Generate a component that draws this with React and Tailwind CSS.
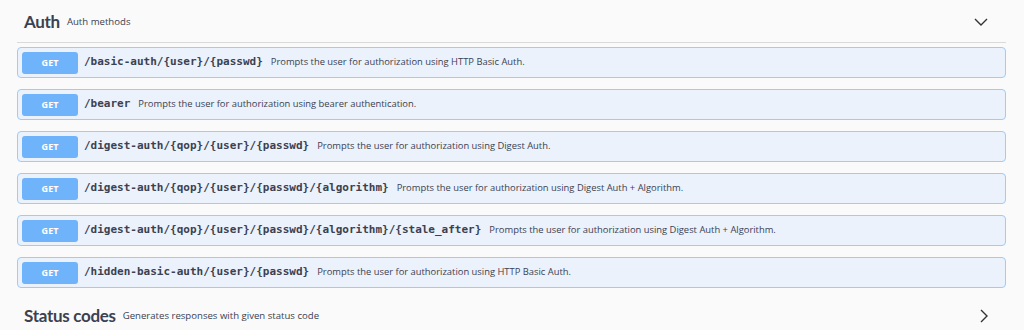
import React from 'react';

const ops = [
  { path: '/basic-auth/{user}/{passwd}', desc: 'Prompts the user for authorization using HTTP Basic Auth.' },
  { path: '/bearer', desc: 'Prompts the user for authorization using bearer authentication.' },
  { path: '/digest-auth/{qop}/{user}/{passwd}', desc: 'Prompts the user for authorization using Digest Auth.' },
  { path: '/digest-auth/{qop}/{user}/{passwd}/{algorithm}', desc: 'Prompts the user for authorization using Digest Auth + Algorithm.' },
  { path: '/digest-auth/{qop}/{user}/{passwd}/{algorithm}/{stale_after}', desc: 'Prompts the user for authorization using Digest Auth + Algorithm.' },
  { path: '/hidden-basic-auth/{user}/{passwd}', desc: 'Prompts the user for authorization using HTTP Basic Auth.' },
];

const ChevronDown = () => (
  <svg width="14" height="8" viewBox="0 0 14 8" fill="none">
    <polyline points="1,1 7,7 13,1" stroke="#333" strokeWidth="1.4" />
  </svg>
);

const ChevronRight = () => (
  <svg width="8" height="14" viewBox="0 0 8 14" fill="none">
    <polyline points="1,1 7,7 1,13" stroke="#333" strokeWidth="1.4" />
  </svg>
);

const TagHeader = ({ title, sub, icon, border }) => (
  <div className={`flex items-center h-[42px] pl-[7px] pr-[18px] ${border ? 'border-b border-[#d9dadc]' : ''}`}>
    <span className="text-[17px] font-bold text-[#3b4151] tracking-[-0.3px]" style={{ fontFamily: 'Lato, sans-serif' }}>{title}</span>
    <span className="ml-[7px] text-[9.6px] text-[#3b4151] mt-[1px]" style={{ fontFamily: '"Open Sans", sans-serif' }}>{sub}</span>
    <span className="ml-auto flex items-center">{icon}</span>
  </div>
);

export default function App() {
  return (
    <div className="w-[1024px] h-[330px] overflow-hidden bg-[#fafafa] pl-[17px] pr-[18px]">
      <div className="pt-[1px]">
        <TagHeader title="Auth" sub="Auth methods" icon={<ChevronDown />} border />
      </div>
      <div className="pt-[4px] flex flex-col gap-[11px]">
        {ops.map((op) => (
          <div key={op.path} className="h-[31px] flex items-center rounded-[4px] border border-[#9fcbf8] bg-[#ebf2fb] px-[4px]">
            <div className="w-[56px] h-[22px] rounded-[3px] bg-[#6fb3fb] flex items-center justify-center text-white text-[9px] font-bold" style={{ fontFamily: '"Open Sans", sans-serif' }}>
              GET
            </div>
            <span className="ml-[6px] text-[11px] font-bold text-[#3b4151]" style={{ fontFamily: '"DejaVu Sans Mono", monospace' }}>{op.path}</span>
            <span className="ml-[8px] text-[9.4px] text-[#3b4151]" style={{ fontFamily: '"Open Sans", sans-serif' }}>{op.desc}</span>
          </div>
        ))}
      </div>
      <div className="mt-[7px]">
        <TagHeader title="Status codes" sub="Generates responses with given status code" icon={<ChevronRight />} />
      </div>
    </div>
  );
}
